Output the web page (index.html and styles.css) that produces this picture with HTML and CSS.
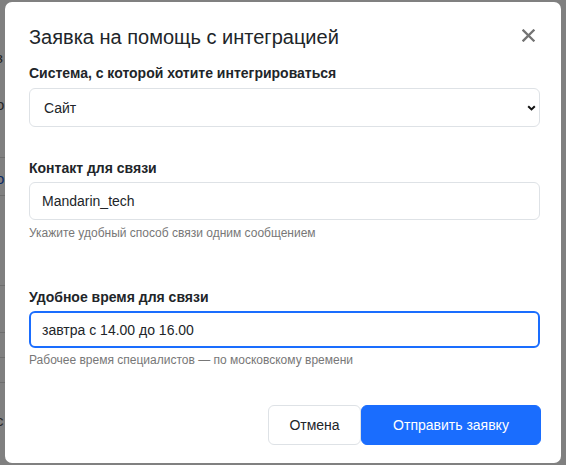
FILE: index.html
```html
<!DOCTYPE html>
<html lang="ru">
<head>
    <meta charset="UTF-8">
    <meta name="viewport" content="width=device-width, initial-scale=1.0">
    <title>Заявка на помощь с интеграцией</title>
    <link rel="stylesheet" href="styles.css">
</head>
<body>
    <div class="page">
        <div class="behind">
            <div class="behind-block block-top">
                <span class="peek">з</span>
                <span class="peek peek-low">о</span>
            </div>
            <div class="behind-block block-link"><span class="peek peek-link">о</span></div>
            <div class="behind-block block-a"></div>
            <div class="behind-block block-b"></div>
            <div class="behind-block block-c"></div>
            <div class="behind-block block-d"></div>
            <div class="behind-block block-e"><span class="peek">с</span></div>
        </div>

        <div class="modal">
            <div class="modal-header">
                <h5 class="modal-title">Заявка на помощь с интеграцией</h5>
                <button type="button" class="btn-close" aria-label="Закрыть">
                    <svg width="13" height="13" viewBox="0 0 13 13">
                        <path d="M1.5 1.5 L11.5 11.5 M11.5 1.5 L1.5 11.5" stroke="#737373" stroke-width="2.3" stroke-linecap="square"/>
                    </svg>
                </button>
            </div>

            <form class="modal-body">
                <div class="field field-system">
                    <label class="form-label" for="system">Система, с которой хотите интегрироваться</label>
                    <div class="select-wrap">
                        <select class="form-select" id="system">
                            <option>Сайт</option>
                            <option>CRM</option>
                            <option>Другое</option>
                        </select>
                        <svg class="select-arrow" width="9" height="6" viewBox="0 0 9 6">
                            <path d="M1.2 1.2 L4.5 4.4 L7.8 1.2" fill="none" stroke="#111" stroke-width="2"/>
                        </svg>
                    </div>
                </div>

                <div class="field field-contact">
                    <label class="form-label" for="contact">Контакт для связи</label>
                    <input type="text" class="form-control" id="contact" value="Mandarin_tech">
                    <div class="form-text">Укажите удобный способ связи одним сообщением</div>
                </div>

                <div class="field field-time">
                    <label class="form-label" for="time">Удобное время для связи</label>
                    <input type="text" class="form-control is-focused" id="time" value="завтра с 14.00 до 16.00">
                    <div class="form-text">Рабочее время специалистов — по московскому времени</div>
                </div>

                <div class="modal-footer">
                    <button type="button" class="btn btn-light">Отмена</button>
                    <button type="submit" class="btn btn-primary">Отправить заявку</button>
                </div>
            </form>
        </div>
    </div>
</body>
</html>
```

FILE: styles.css
```css
* {
    box-sizing: border-box;
}

body {
    margin: 0;
    font-family: "Liberation Sans", Arial, sans-serif;
    color: #212529;
    background-color: #808080;
    overflow: hidden;
}

.page {
    display: flex;
    height: 465px;
}

/* page behind the backdrop, only a sliver shows */
.behind {
    width: 5px;
    flex-shrink: 0;
    overflow: hidden;
    display: flex;
    flex-direction: column;
}

.behind-block {
    border-bottom: 1px solid #6e6e6e;
    font-size: 15px;
    line-height: 15px;
    color: #262626;
    white-space: nowrap;
}

.peek {
    display: block;
    margin-left: -4px;
}

.block-top {
    height: 158px;
    padding-top: 50px;
}

.peek-low {
    margin-top: 32px;
}

.block-link {
    height: 38px;
    padding-top: 13px;
}

.peek-link {
    color: #0a2a66;
}

.block-a {
    height: 90px;
}

.block-b {
    height: 47px;
}

.block-c {
    height: 25px;
}

.block-d {
    height: 25px;
}

.block-e {
    border-bottom: none;
    padding-top: 30px;
}

/* dialog */
.modal {
    width: 556px;
    height: 461px;
    margin-top: 2px;
    background-color: #fff;
    border-radius: 7px;
    padding: 23px 21px 0 24px;
}

.modal-header {
    display: flex;
    justify-content: space-between;
    align-items: flex-start;
}

.modal-title {
    margin: 0;
    font-size: 20px;
    line-height: 24px;
    font-weight: normal;
}

.btn-close {
    border: none;
    background: none;
    padding: 0;
    margin: 4px 5px 0 0;
    width: 13px;
    height: 13px;
    cursor: pointer;
}

.btn-close svg {
    display: block;
}

.modal-body {
    margin: 16px 0 0;
}

.form-label {
    display: block;
    font-size: 14px;
    line-height: 17px;
    font-weight: bold;
    margin-bottom: 5px;
}

.field-system .form-label {
    margin-bottom: 6px;
}

.field-contact {
    margin-top: 33px;
}

.field-time {
    margin-top: 48px;
}

.form-select,
.form-control {
    display: block;
    width: 100%;
    font-family: inherit;
    font-size: 14px;
    color: #212529;
    background-color: #fff;
    border: 1px solid #dee2e6;
    border-radius: 6px;
    outline: none;
}

.select-wrap {
    position: relative;
}

.form-select {
    appearance: none;
    -webkit-appearance: none;
    height: 39px;
    padding: 0 24px 0 14px;
}

.select-arrow {
    position: absolute;
    right: 4px;
    top: 17px;
    pointer-events: none;
}

.form-control {
    height: 38px;
    padding: 0 12px;
}

.form-control.is-focused {
    height: 37px;
    border: 2px solid #1a6dfe;
    padding: 0 11px;
}

.form-text {
    font-size: 12px;
    line-height: 15px;
    color: #777;
    margin-top: 6px;
}

.field-time .form-text {
    margin-top: 5px;
}

.modal-footer {
    display: flex;
    justify-content: flex-end;
    margin-top: 37px;
    margin-right: -1px;
}

.btn {
    height: 40px;
    font-family: inherit;
    font-size: 14px;
    border-radius: 6px;
    cursor: pointer;
}

.btn-light {
    width: 93px;
    background-color: #fff;
    color: #212529;
    border: 1px solid #dee2e6;
}

.btn-primary {
    width: 180px;
    background-color: #1a6dfe;
    color: #fff;
    border: 1px solid #1a6dfe;
}
```
